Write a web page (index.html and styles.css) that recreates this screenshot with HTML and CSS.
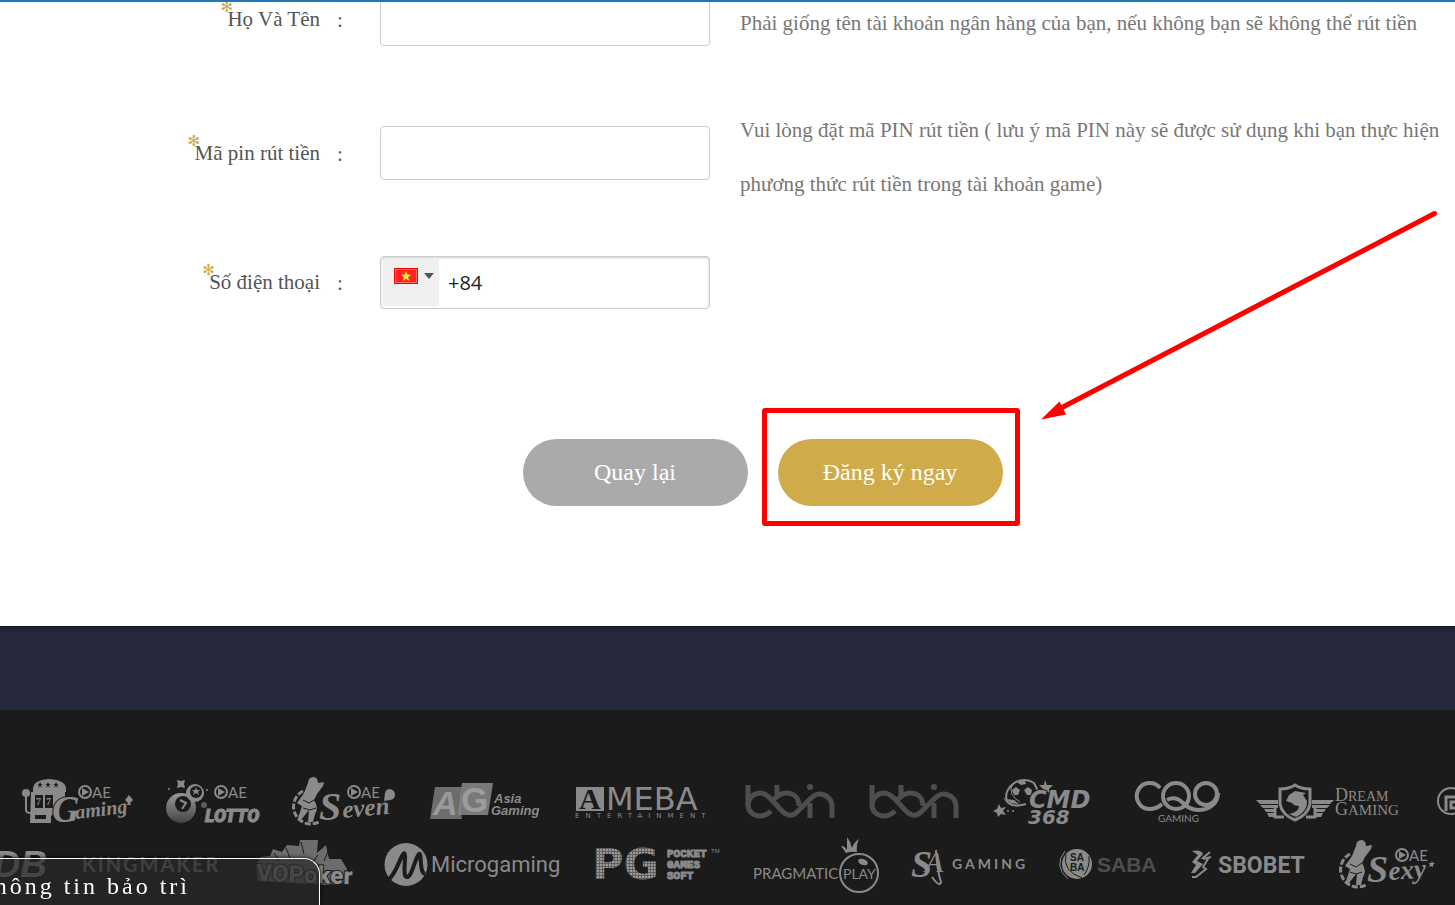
FILE: index.html
```html
<!DOCTYPE html>
<html lang="vi">
<head>
    <meta charset="UTF-8">
    <meta name="viewport" content="width=device-width, initial-scale=1.0">
    <title>Đăng ký</title>
    <link rel="stylesheet" href="styles.css">
</head>
<body>
    <main class="register">
        <form id="registerForm">
            <div class="row">
                <label for="fullname"><span class="star">✻</span>Họ Và Tên</label>
                <span class="colon">:</span>
                <input class="field" type="text" id="fullname">
                <p class="hint">Phải giống tên tài khoản ngân hàng của bạn, nếu không bạn sẽ không thể rút tiền</p>
            </div>
            <div class="row">
                <label for="pin"><span class="star">✻</span>Mã pin rút tiền</label>
                <span class="colon">:</span>
                <input class="field" type="password" id="pin">
                <p class="hint">Vui lòng đặt mã PIN rút tiền ( lưu ý mã PIN này sẽ được sử dụng khi bạn thực hiện phương thức rút tiền trong tài khoản game)</p>
            </div>
            <div class="row">
                <label for="phone"><span class="star">✻</span>Số điện thoại</label>
                <span class="colon">:</span>
                <div class="field phone">
                    <button type="button" class="country" aria-label="Việt Nam">
                        <svg width="24" height="16" viewBox="0 0 24 16">
                            <rect width="24" height="16" fill="#f00"/>
                            <rect x="1.5" y="1.5" width="21" height="13" fill="#f22" stroke="#ff6a5a"/>
                            <path d="M12 3l1.400 3.600 3.800.2-3 2.400 1 3.700L12 10.800l-3.200 2.100 1-3.700-3-2.400 3.800-.2z" fill="#ffe62e"/>
                        </svg>
                        <span class="caret"></span>
                    </button>
                    <input type="tel" id="phone" value="+84">
                </div>
            </div>
            <div class="actions">
                <button type="button" class="btn back">Quay lại</button>
                <div class="highlight">
                    <button type="submit" class="btn submit">Đăng ký ngay</button>
                    <svg class="arrow" width="400" height="214" viewBox="1040 208 400 214">
                        <path d="M1434.500 213.500L1060 408.500" stroke="#f00" stroke-width="5" stroke-linecap="round"/>
                        <path d="M1041 419.500L1059.500 401.500L1066 414.500z" fill="#f00"/>
                    </svg>
                </div>
            </div>
        </form>
    </main>

    <div class="band"></div>

    <footer>
        <div class="logos first">
            <!-- AE Gaming -->
            <svg width="111" height="60" viewBox="22 772 111 60">
                <path d="M33 789q0-9 16-10q17 1 17 10v3H33z"/>
                <path d="M31 792h34v5l-8 5v9l-6 5v7H30z"/>
                <g class="hole"><rect x="35" y="795" width="8" height="13"/><rect x="45" y="795" width="8" height="13"/><rect x="35" y="815" width="11" height="4"/><path d="M40 782l1 2h2l-2 1 1 3-2-2-2 2 1-3-2-1h2zM48 782l1 2h2l-2 1 1 3-2-2-2 2 1-3-2-1h2zM56 782l1 2h2l-2 1 1 3-2-2-2 2 1-3-2-1h2z"/></g>
                <text x="36" y="805" font-size="10" font-weight="bold">7</text><text x="46" y="805" font-size="10" font-weight="bold">7</text>
                <circle cx="26" cy="793" r="4"/><path class="line" d="M26 796v14q0 3 5 3" stroke-width="2"/>
                <circle class="line" cx="85" cy="792" r="6" stroke-width="2"/><path d="M82 788l7 4-7 4z"/>
                <text x="92" y="798" font-size="15" class="lato">AE</text>
                <text x="52" y="822" font-size="38" class="script outline">G</text>
                <text x="76" y="819" font-size="20" class="script" transform="rotate(-7 76 819)">aming</text>
                <path d="M129 795l4 5-3 3 1 2h-4l1-2-3-3z"/>
            </svg>
            <!-- AE Lotto -->
            <svg width="93" height="60" viewBox="165 772 93 60">
                <defs>
                    <linearGradient id="ball" x1="0" y1="0" x2="0" y2="1"><stop offset="0" stop-color="#999"/><stop offset="1" stop-color="#444"/></linearGradient>
                </defs>
                <circle cx="181" cy="808" r="15" fill="url(#ball)"/><circle class="hole" cx="183" cy="804" r="8"/>
                <path class="line" d="M180 800l6 3-4 6" stroke-width="2"/>
                <circle cx="195" cy="793" r="9"/><circle class="hole" cx="196" cy="792" r="6"/><path d="M196 787l1 3h3l-2 2 1 3-3-2-3 2 1-3-2-2h3z"/>
                <path d="M177 780l4 1 4-1-1 4 1 4-4-1-4 1 1-4z"/><circle cx="169" cy="789" r="1"/><circle cx="207" cy="790" r="1"/><circle cx="204" cy="805" r="3" opacity=".6"/>
                <circle class="line" cx="221" cy="792" r="6" stroke-width="2"/><path d="M218 788l7 4-7 4z"/>
                <text x="228" y="798" font-size="15" class="lato">AE</text>
                <text x="205" y="822" font-size="18" class="heavy">LOTTO</text>
            </svg>
            <!-- AE Seven -->
            <svg width="107" height="60" viewBox="290 772 107 60">
                <path class="line" d="M303 791a17 17 0 1 0 16 31" stroke-width="3" stroke-dasharray="6 2"/>
                <path d="M308 783q0-6 6-6 4 1 4 6l6-1-1 4-6 8-3 6q5 8 1 14l-2 8h-5l1-12-8 10-3-2 4-12-5-3 7-10z"/>
                <path class="gap" d="M303 800l6 3 7-4M303 808l7 2 6-2" stroke-width="1"/>
                <text x="319" y="820" font-size="40" class="script">S</text>
                <text x="343" y="818" font-size="25" class="script" transform="rotate(-5 343 818)">even</text>
                <circle class="line" cx="354" cy="792" r="6" stroke-width="2"/><path d="M351 788l7 4-7 4z"/>
                <text x="361" y="798" font-size="15" class="lato">AE</text>
                <path d="M385 793q1-4 5-4 5 1 5 6 0 4-5 5l-6 1z"/>
            </svg>
            <!-- Asia Gaming -->
            <svg width="113" height="60" viewBox="429 772 113 60">
                <path d="M435 787h27l-1 27 1 5h-32z" opacity=".75"/><path d="M462 783h31l-5 32h-30z" opacity=".85"/>
                <text x="433" y="815" font-size="34" class="arial bold italic" fill="#999">A</text>
                <text x="461" y="812" font-size="35" class="arial bold" fill="#9c9c9c">G</text>
                <text x="494" y="803" font-size="13" class="arial bold italic">Asia</text>
                <text x="491" y="815" font-size="13" class="arial bold italic">Gaming</text>
            </svg>
            <!-- Ameba -->
            <svg width="138" height="60" viewBox="574 772 138 60">
                <rect x="576" y="787" width="28" height="24"/>
                <text x="579" y="809" font-size="30" class="serif bold hole">A</text>
                <text x="606" y="810" font-size="32" class="wide">MEBA</text>
                <text x="575" y="818" font-size="7" class="wide" letter-spacing="6">ENTERTAINMENT</text>
            </svg>
            <!-- bbin -->
            <svg width="92" height="60" viewBox="744 772 92 60">
                <g class="line dim" stroke-width="5">
                    <path d="M748 785v20c0 7 6 11 12 11 5 0 8-2 11-5"/>
                    <path d="M748 805c0-7 6-12 12-12 5 0 8 3 11 6l10 11c5 6 11 7 16 2l12-12c3-3 6-6 10-6 7 0 13 5 13 12v12"/>
                    <path d="M777 785v10M773 800c4-4 8-7 13-7 8 0 13 5 13 13M810 803v15"/>
                </g>
                <circle class="dimfill" cx="810" cy="787" r="3"/>
            </svg>
            <svg width="92" height="60" viewBox="744 772 92 60">
                <g class="line dim" stroke-width="5">
                    <path d="M748 785v20c0 7 6 11 12 11 5 0 8-2 11-5"/>
                    <path d="M748 805c0-7 6-12 12-12 5 0 8 3 11 6l10 11c5 6 11 7 16 2l12-12c3-3 6-6 10-6 7 0 13 5 13 12v12"/>
                    <path d="M777 785v10M773 800c4-4 8-7 13-7 8 0 13 5 13 13M810 803v15"/>
                </g>
                <circle class="dimfill" cx="810" cy="787" r="3"/>
            </svg>
            <!-- CMD368 -->
            <svg width="109" height="60" viewBox="992 772 109 60">
                <path class="line" d="M1026 804q-14 4-19-3c-5-14 14-27 27-18l4 8" stroke-width="2"/>
                <path class="line" d="M1004 798q5 12 22 6M1012 785q-4 10 8 17" stroke-width="1"/>
                <path d="M1020 780l5 1 1 3-5 1-3-2zM1012 790l4-3 4 3-2 5h-4zM1024 790l4-3 4 3-1 5h-4zM1006 799l8 1 5 4-8-1z"/>
                <path d="M1045 780l2 5h6l-4 4 2 5-5-3-5 3 2-5-4-4h5zM999 804l2 4 5-1-3 4 3 4-5-1-3 3-1-4-4-2 4-2z"/>
                <circle cx="1008" cy="811" r="1"/><circle cx="1013" cy="811" r="1"/><circle cx="1038" cy="791" r="1"/>
                <text x="1029" y="808" font-size="24" class="wide bold italic outline">CMD</text>
                <text x="1028" y="824" font-size="20" class="wide bold italic">368</text>
            </svg>
            <!-- CQ9 -->
            <svg width="90" height="60" viewBox="1133 772 90 60">
                <g class="line" stroke-width="4">
                    <path d="M1160 788a13 13 0 1 0-11 21c6 0 10-2 13-5"/>
                    <path d="M1167 800c7-4 12-1 16 3 5 5 9 7 15 7 12 0 20-7 20-17"/>
                    <circle cx="1176" cy="796" r="13"/>
                    <circle cx="1206" cy="794" r="11"/>
                </g>
                <text x="1158" y="822" font-size="10" class="lato">GAMING</text>
            </svg>
            <!-- Dream Gaming -->
            <svg width="150" height="60" viewBox="1255 772 150 60">
                <path class="line" d="M1295 785q-6 4-15 4v15q2 11 15 16 13-5 15-16v-15q-9 0-15-4z" stroke-width="3"/>
                <path d="M1286 801l3-6 6-4 11 2-3 2 4 6q1 10-11 16l-7-3q10-2 10-8-5 0-7-3z"/>
                <path d="M1256 800h22v4h-18zM1260 805h18v3h-15zM1264 809h10v3h-8zM1267 813h7v4h-5zM1334 800h-22v4h18zM1330 805h-18v3h15zM1326 809h-10v3h8zM1323 813h-7v4h5z"/>
                <path class="line" d="M1284 817h-9v-12M1306 817h9v-12" stroke-width="3"/>
                <text x="1335" y="801" font-size="18" class="serif">D<tspan font-size="14">REAM</tspan></text>
                <text x="1335" y="815" font-size="18" class="serif">G<tspan font-size="15">AMING</tspan></text>
            </svg>
            <svg width="60" height="60" viewBox="1437 772 60 60">
                <circle class="line" cx="1451" cy="801" r="13" stroke-width="2"/>
                <path class="line" d="M1446 811v-14h14M1460 802h-9v6h9" stroke-width="3"/>
            </svg>
        </div>
        <div class="logos second">
            <!-- JDB -->
            <svg width="82" height="60" viewBox="-32 834 82 60">
                <text x="-27" y="877" font-size="37" class="arial bold italic">JDB</text>
            </svg>
            <!-- Kingmaker -->
            <svg width="140" height="60" viewBox="82 834 140 60">
                <text x="82" y="872" font-size="20" class="lato bold mid" letter-spacing="2">KINGMAKER</text>
            </svg>
            <!-- Void Poker -->
            <svg width="97" height="60" viewBox="254 834 97 60">
                <path d="M256 866l4-9 10-1 3-7 9 3 5-7 12 1 1-6h18l-1 13 9-8 3 14h12l6 10-3 14-16 2-70-4z" opacity=".75"/>
                <path class="gap" d="M274 853l5 8M286 848l4 10M301 842l3 12M318 855l-6 8M329 849l-5 12" stroke-width="1"/>
                <text x="256" y="881" font-size="24" class="heavy plain outline" transform="rotate(2 256 881)">VOPoker</text>
            </svg>
            <!-- Microgaming -->
            <svg width="178" height="60" viewBox="383 834 178 60">
                <circle cx="406" cy="864.500" r="21.500"/>
                <path class="gap" d="M387 881c7-4 11-17 15-25q3-6 3 1c0 8-2 20 2 20 5 0 8-19 12-23 3-2 0 19 6 20" stroke-width="4"/>
                <text x="431" y="872" font-size="22" class="roboto">Microgaming</text>
            </svg>
            <!-- PG Soft -->
            <svg width="128" height="60" viewBox="593 834 128 60">
                <defs>
                    <pattern id="dots" width="3" height="3" patternUnits="userSpaceOnUse"><rect width="3" height="3" fill="#606060"/><rect width="2" height="2" fill="#9a9a9a"/></pattern>
                </defs>
                <text x="592" y="879" font-size="43" class="wide bold" fill="url(#dots)">PG</text>
                <text x="667" y="857" font-size="11" class="mono">POCKET</text>
                <text x="667" y="868" font-size="11" class="mono">GAMES</text>
                <text x="667" y="879" font-size="11" class="mono">SOFT</text>
                <text x="711" y="853" font-size="6" class="arial">TM</text>
            </svg>
            <!-- Pragmatic Play -->
            <svg width="126" height="60" viewBox="753 834 126 60">
                <circle class="line" cx="859" cy="873" r="19" stroke-width="2"/>
                <path d="M846 853l-5-7q4 0 6 4l0-13q4 5 5 11 2-6 7-9-3 6-2 13-6-1-11 1z"/>
                <ellipse cx="863" cy="862" rx="5" ry="3" transform="rotate(20 863 862)"/>
                <text x="753" y="879" font-size="15" class="lato">PRAGMATIC</text>
                <text x="843" y="879" font-size="14" class="lato">PLAY</text>
            </svg>
            <!-- SA Gaming -->
            <svg width="115" height="60" viewBox="911 834 115 60">
                <text x="911" y="877" font-size="38" class="script">S</text>
                <text x="925" y="872" font-size="30" class="script normal">A</text>
                <path class="line" d="M936 850q1 20 5 32-1 6-9-5" stroke-width="2"/>
                <text x="952" y="869" font-size="14" class="lato bold" letter-spacing="3">GAMING</text>
            </svg>
            <!-- Saba -->
            <svg width="100" height="60" viewBox="1058 834 100 60">
                <circle cx="1077" cy="864" r="15"/>
                <path class="line" d="M1065 851q-12 15 3 28" stroke-width="1"/>
                <path class="gap" d="M1066 854q-4 17 16 24M1089 856q1 11-5 19" stroke-width="1"/>
                <text x="1070" y="861" font-size="10" class="arial bold hole">SA</text>
                <text x="1070" y="871" font-size="10" class="arial bold hole">BA</text>
                <text x="1097" y="872" font-size="21" class="arial bold dimfill">SABA</text>
            </svg>
            <!-- Sbobet -->
            <svg width="115" height="60" viewBox="1190 834 115 60">
                <path d="M1192 851q9-2 11 3l-6 7 6 3-8 9h-4l5-8-4-3 6-7z"/>
                <path class="line" d="M1210 852l-7 6 5 1-5 8 3 2-10 8h-4M1203 859l8-2" stroke-width="2"/>
                <text x="1218" y="873" font-size="23" class="roboto bold">SBOBET</text>
            </svg>
            <!-- AE Sexy -->
            <svg width="100" height="60" viewBox="1337 834 100 60">
                <path class="line" d="M1350 854a17 17 0 1 0 16 31" stroke-width="3" stroke-dasharray="6 2"/>
                <path d="M1356 846q0-6 6-6 4 1 4 6l6-1-1 4-6 8-3 6q5 8 1 14l-2 8h-5l1-12-8 10-3-2 4-12-5-3 7-10z"/>
                <path class="gap" d="M1350 864l6 3 6-4M1350 872l6 2 6-2" stroke-width="1"/>
                <text x="1367" y="882" font-size="38" class="script">S</text>
                <text x="1389" y="880" font-size="27" class="script" transform="rotate(-4 1389 880)">exy</text>
                <circle class="line" cx="1402" cy="855" r="6" stroke-width="2"/><path d="M1399 851l7 4-7 4z"/>
                <text x="1409" y="861" font-size="15" class="lato">AE</text>
                <path d="M1432 861l1 2h2l-2 2v2l-2-1-2 1 1-3-2-1h3z"/>
            </svg>
        </div>
    </footer>

    <div class="topbar"></div>
    <a class="notice" href="#">Thông tin bảo trì</a>
</body>
</html>
```
FILE: styles.css
```css
* {
    box-sizing: border-box;
}

body {
    margin: 0;
    height: 100vh;
    overflow: hidden;
    display: flex;
    flex-direction: column;
    font-family: "Liberation Serif", "Times New Roman", serif;
    font-size: 21px;
    background: #1b1b1b;
}

.topbar {
    position: fixed;
    top: 0;
    left: 0;
    right: 0;
    height: 2px;
    background: #2276b5;
}

.register {
    flex: none;
    background: #fff;
    padding-bottom: 120px;
}

form {
    display: flex;
    flex-direction: column;
    gap: 45px;
    margin-top: -12px;
}

.row {
    display: grid;
    grid-template-columns: 320px 40px 370px 1fr;
    align-items: center;
}

.row label {
    position: relative;
    justify-self: end;
    color: #555;
}

.star {
    position: absolute;
    left: -7px;
    top: -9px;
    font-family: "DejaVu Sans", sans-serif;
    font-size: 15px;
    color: #cfab4a;
}

.colon {
    padding-top: 2px;
    text-align: center;
    color: #555;
}

.field {
    width: 330px;
    height: 54px;
    margin-left: 20px;
    border: 1px solid #ccc;
    border-radius: 4px;
    background: #fff;
}

.phone {
    display: flex;
    height: 53px;
    padding: 2px;
    box-shadow: inset 0 1px 3px rgba(0, 0, 0, 0.2);
}

.country {
    display: flex;
    gap: 6px;
    width: 56px;
    padding: 9px 0 0 11px;
    border: none;
    background: #efefef;
}

.caret {
    margin-top: 5px;
    border: 5px solid transparent;
    border-top: 6px solid #555;
    border-bottom: none;
}

.phone input {
    flex: 1;
    min-width: 0;
    padding: 0 9px;
    border: none;
    background: none;
    font-family: "Open Sans", sans-serif;
    font-size: 20px;
    color: #222;
}

.hint {
    margin: 0;
    padding: 8px 10px 0;
    line-height: 54px;
    color: #777;
}

.actions {
    display: flex;
    justify-content: center;
    gap: 30px;
    margin-top: 85px;
    padding-left: 70px;
}

.btn {
    display: block;
    width: 225px;
    height: 67px;
    border: none;
    border-radius: 34px;
    font-family: inherit;
    font-size: 24px;
    color: #fff;
    cursor: pointer;
}

.back {
    background: #aaa;
}

.submit {
    background: #cfab4a;
}

.highlight {
    position: relative;
}

.highlight::after {
    content: "";
    position: absolute;
    inset: -31px -17px -20px -16px;
    border: 5px solid #f00;
    border-radius: 3px;
    pointer-events: none;
}

.arrow {
    position: absolute;
    left: 262px;
    bottom: 84px;
    pointer-events: none;
}

.band {
    flex: none;
    height: 84px;
    background: #272a3d;
    box-shadow: inset 0 8px 6px -6px rgba(0, 0, 0, 0.4);
}

footer {
    flex: none;
    padding-top: 62px;
}

.logos {
    display: flex;
    gap: 32px;
    height: 62px;
}

.first {
    padding-left: 22px;
}

.second {
    margin-left: -32px;
}

.logos svg {
    flex: none;
    overflow: visible;
    fill: #8a8a8a;
}

.logos .line {
    fill: none;
    stroke: #8a8a8a;
}

.logos .dim {
    stroke: #4e4e4e;
}

.logos .dimfill {
    fill: #4e4e4e;
}

.logos .mid {
    fill: #7a7a7a;
}

.logos .hole {
    fill: #1b1b1b;
}

.logos .gap {
    fill: none;
    stroke: #1b1b1b;
}

.arial {
    font-family: "Liberation Sans", sans-serif;
}

.lato {
    font-family: Lato, sans-serif;
}

.serif {
    font-family: "Liberation Serif", serif;
}

.roboto {
    font-family: Roboto, sans-serif;
}

.wide {
    font-family: "DejaVu Sans", sans-serif;
}

.mono {
    font-family: "Liberation Mono", monospace;
    font-weight: bold;
    stroke: #8a8a8a;
}

.script {
    font-family: "Liberation Serif", serif;
    font-style: italic;
    font-weight: bold;
}

.normal {
    font-weight: normal;
}

.heavy {
    font-family: Roboto, sans-serif;
    font-style: italic;
    font-weight: 900;
    stroke: #8a8a8a;
}

.plain {
    font-style: normal;
}

.outline {
    stroke: #1b1b1b;
    stroke-width: 2px;
    paint-order: stroke;
}

.bold {
    font-weight: bold;
}

.italic {
    font-style: italic;
}

.notice {
    position: fixed;
    left: -24px;
    bottom: 0;
    width: 344px;
    height: 47px;
    border: 1px solid #fff;
    border-bottom: none;
    border-radius: 0 16px 0 0;
    background: rgba(40, 40, 40, 0.7);
    box-shadow: 0 0 4px #000;
    line-height: 54px;
    font-size: 24px;
    letter-spacing: 3px;
    color: #fff;
    text-decoration: none;
}
```
